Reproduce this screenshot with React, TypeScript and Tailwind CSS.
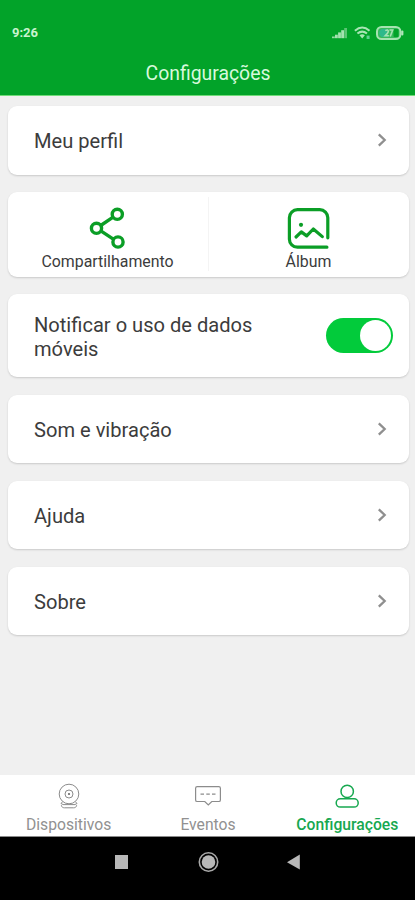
import type { ReactNode } from 'react';
import clsx from 'clsx';

const tabs = [
  { label: 'Dispositivos', icon: CameraIcon, active: false },
  { label: 'Eventos', icon: MessageIcon, active: false },
  { label: 'Configurações', icon: UserIcon, active: true },
];

function SignalIcon() {
  return (
    <svg className="w-4 h-3" viewBox="0 0 16 12" fill="#a5e2b0">
      <rect x="0" y="9.5" width="2.8" height="1.7" opacity=".9" />
      <rect x="3" y="7.7" width="2.8" height="3.5" />
      <rect x="6.1" y="5.4" width="2.8" height="5.8" />
      <rect x="9.2" y="3.2" width="2.8" height="8" />
      <rect x="12.2" y="1" width="2.8" height="10.2" opacity=".55" />
    </svg>
  );
}

function WifiIcon() {
  return (
    <svg className="w-[17px] h-[14px]" viewBox="0 0 17 14" fill="none" stroke="#a9e5b4" strokeWidth="2">
      <path d="M.9 4.7Q8.2-1.6 15.5 4.7" />
      <path d="M3.4 7.6q4.8-4 9.6 0" />
      <path d="M5.5 9.2q2.7-2 5.4 0L8.2 12.6z" fill="#a9e5b4" stroke="none" />
      <rect x="12.6" y="9.6" width="3" height="3.4" fill="#5fcf90" stroke="none" />
    </svg>
  );
}

function BatteryIcon() {
  return (
    <svg className="w-[28px] h-[14px]" viewBox="0 0 28 14">
      <rect x="1" y="1" width="23.4" height="12" rx="4.5" fill="#36ba5a" stroke="#a5e3b0" strokeWidth="2" />
      <path d="M5.5 3H12v8H5.5Q3 9 3 7t2.5-4z" fill="#2eb98b" />
      <rect x="17.5" y="3" width="5" height="8" rx="1" fill="#02a329" />
      <path d="M9.3 4.6q3-1.6 3 .7 0 1.6-3 4.4h3.6M13.5 4h3.2l-2.5 6.5" fill="none" stroke="#a5e3b0" strokeWidth="1.6" />
      <rect x="25.2" y="4.6" width="2.2" height="4.8" rx="1" fill="#b0e6ba" />
    </svg>
  );
}

function ShareIcon() {
  return (
    <svg className="w-10 h-11" viewBox="0 0 40 44" fill="none" stroke="#0b9e26" strokeWidth="3.4">
      <circle cx="29.3" cy="8.3" r="5.1" />
      <circle cx="8.5" cy="22.3" r="5.1" />
      <circle cx="30" cy="36" r="5.1" />
      <path d="M12.7 19.5 25.1 11.1M12.8 24.9l12.9 8.4" />
    </svg>
  );
}

function AlbumIcon() {
  return (
    <svg className="w-11 h-11" viewBox="0 0 44 44" fill="none" stroke="#0b9e26" strokeWidth="3.2" strokeLinecap="round" strokeLinejoin="round">
      <path d="M40.8 31.8V11.7a8 8 0 0 0-8-8H10.4a8 8 0 0 0-8 8v21.5a8 8 0 0 0 8 8h29.5" />
      <path d="m9 31 5.3-5.1 5.4 4L26.3 23l9 7.6" />
      <circle cx="14" cy="18.8" r="2.1" fill="#0b9e26" stroke="none" />
    </svg>
  );
}

function CameraIcon() {
  return (
    <svg className="w-[28px] h-[28px]" viewBox="0 0 28 28" fill="none" stroke="#8c8c8c" strokeWidth="1">
      <circle cx="14" cy="12" r="9.8" />
      <circle cx="14" cy="12" r="4" />
      <circle cx="14" cy="12" r="1.1" fill="#666" stroke="none" />
      <path d="M7.5 19.8 6 21.5l2 1M20.5 19.8l1.5 1.7-2 1" />
      <path d="M8 22.6h12M6.3 23.2c.3 1.8 1.4 2.6 3.2 2.6h9c1.8 0 2.9-.8 3.2-2.6" />
    </svg>
  );
}

function MessageIcon() {
  return (
    <svg className="w-[28px] h-[28px]" viewBox="0 0 28 28" fill="none" stroke="#8c8c8c" strokeWidth="1.2">
      <path d="M3.2 4.7h21.6q1.6 0 1.6 1.6v11.6q0 1.6-1.6 1.6h-7L14.3 23l-3.5-3.5H3.2q-1.6 0-1.6-1.6V6.3q0-1.6 1.6-1.6z" />
      <path d="M6.5 12.2h3.5M12.3 12.2h3.5M18 12.2h3.5" />
    </svg>
  );
}

function UserIcon() {
  return (
    <svg className="w-[28px] h-[28px]" viewBox="0 0 28 28" fill="none" stroke="#17a850" strokeWidth="1.5">
      <circle cx="14.2" cy="9.4" r="6.2" />
      <rect x="3.2" y="16.8" width="22" height="8.3" rx="4.1" />
    </svg>
  );
}

function Chevron() {
  return (
    <svg className="w-[10px] h-[14px]" viewBox="0 0 10 14" fill="none" stroke="#8f8f8f" strokeWidth="2.3">
      <path d="m1.8 1.3 5.9 5.7-5.9 5.7" />
    </svg>
  );
}

function Card({ className, children }: { className?: string; children: ReactNode }) {
  return (
    <section className={clsx('flex shrink-0 items-center rounded-[9px] bg-white shadow-[0_1px_2px_rgba(0,0,0,0.16)]', className)}>
      {children}
    </section>
  );
}

function LinkCard({ label }: { label: string }) {
  return (
    <Card className="h-[68.5px] justify-between pl-[26.5px] pr-[22px]">
      <span className="pt-[1.5px] text-[20.1px] leading-6">{label}</span>
      <Chevron />
    </Card>
  );
}

export default function App() {
  return (
    <div className="flex h-[900px] w-[415px] flex-col overflow-hidden bg-[#f0f0f0] font-['Roboto',sans-serif] text-[#3c3c3c]">
      {/* Header */}
      <header className="h-24 shrink-0 border-b border-[#70dc78] bg-[#02a329]">
        <div className="flex h-[50px] items-center justify-between pl-3 pr-[11px] pt-[15px]">
          <span className="text-[13px] font-bold text-[#c9f3ce]">9:26</span>
          <div className="flex items-center">
            <SignalIcon />
            <span className="ml-[6px] mr-[5px] flex"><WifiIcon /></span>
            <BatteryIcon />
          </div>
        </div>
        <h1 className="mt-3 pl-px text-center text-[19.4px] leading-6 text-[#d7f9dc]">Configurações</h1>
      </header>

      {/* Settings */}
      <main className="flex flex-1 flex-col gap-[17.5px] pl-[7.5px] pr-[6.5px] pt-[10px]">
        <LinkCard label="Meu perfil" />

        <Card className="h-[84.5px]">
          <button className="flex h-full flex-1 flex-col items-center pt-[14px]">
            <ShareIcon />
            <span className="mt-[2px] text-[15.9px] leading-5">Compartilhamento</span>
          </button>
          <div className="h-[74px] w-px bg-[#f4f4f4]" />
          <button className="flex h-full flex-1 flex-col items-center pt-[14px]">
            <AlbumIcon />
            <span className="mt-[2px] text-[15.9px] leading-5">Álbum</span>
          </button>
        </Card>

        <Card className="h-[83px] justify-between pl-[26.5px] pr-[15.5px]">
          <p className="w-[240px] pt-[2px] text-[20.1px] leading-6">Notificar o uso de dados móveis</p>
          <button className="flex h-[35px] w-[67px] items-center justify-end rounded-full bg-[#02cb3b] pr-[2px]">
            <span className="h-[31px] w-[31px] rounded-full bg-white" />
          </button>
        </Card>

        <LinkCard label="Som e vibração" />
        <LinkCard label="Ajuda" />
        <LinkCard label="Sobre" />
      </main>

      {/* Tabs */}
      <nav className="flex h-[62px] shrink-0 border-b border-[#8a8a8a] bg-white">
        <div className="-mr-0.5 -ml-px flex flex-1">
          {tabs.map(({ label, icon: Icon, active }) => (
            <button key={label} className="flex flex-1 flex-col items-center pt-[7px]">
              <Icon />
              <span className={clsx('mt-[5px] text-[15.7px] leading-5', active ? 'font-medium text-[#17a850]' : 'text-[#919191]')}>
                {label}
              </span>
            </button>
          ))}
        </div>
      </nav>

      {/* Android navigation */}
      <footer className="flex h-[63px] shrink-0 items-start justify-center bg-black pt-[13px]">
        <svg className="h-6 w-[190px]" viewBox="0 0 190 24" fill="#b8b8b8">
          <rect x="2" y="5" width="13" height="14" />
          <circle cx="95.5" cy="12" r="9.2" fill="none" stroke="#a8a8a8" strokeWidth="1.6" />
          <circle cx="95.5" cy="12" r="6.8" />
          <path d="M174 12.2 186.8 4.5v15z" />
        </svg>
      </footer>
    </div>
  );
}
